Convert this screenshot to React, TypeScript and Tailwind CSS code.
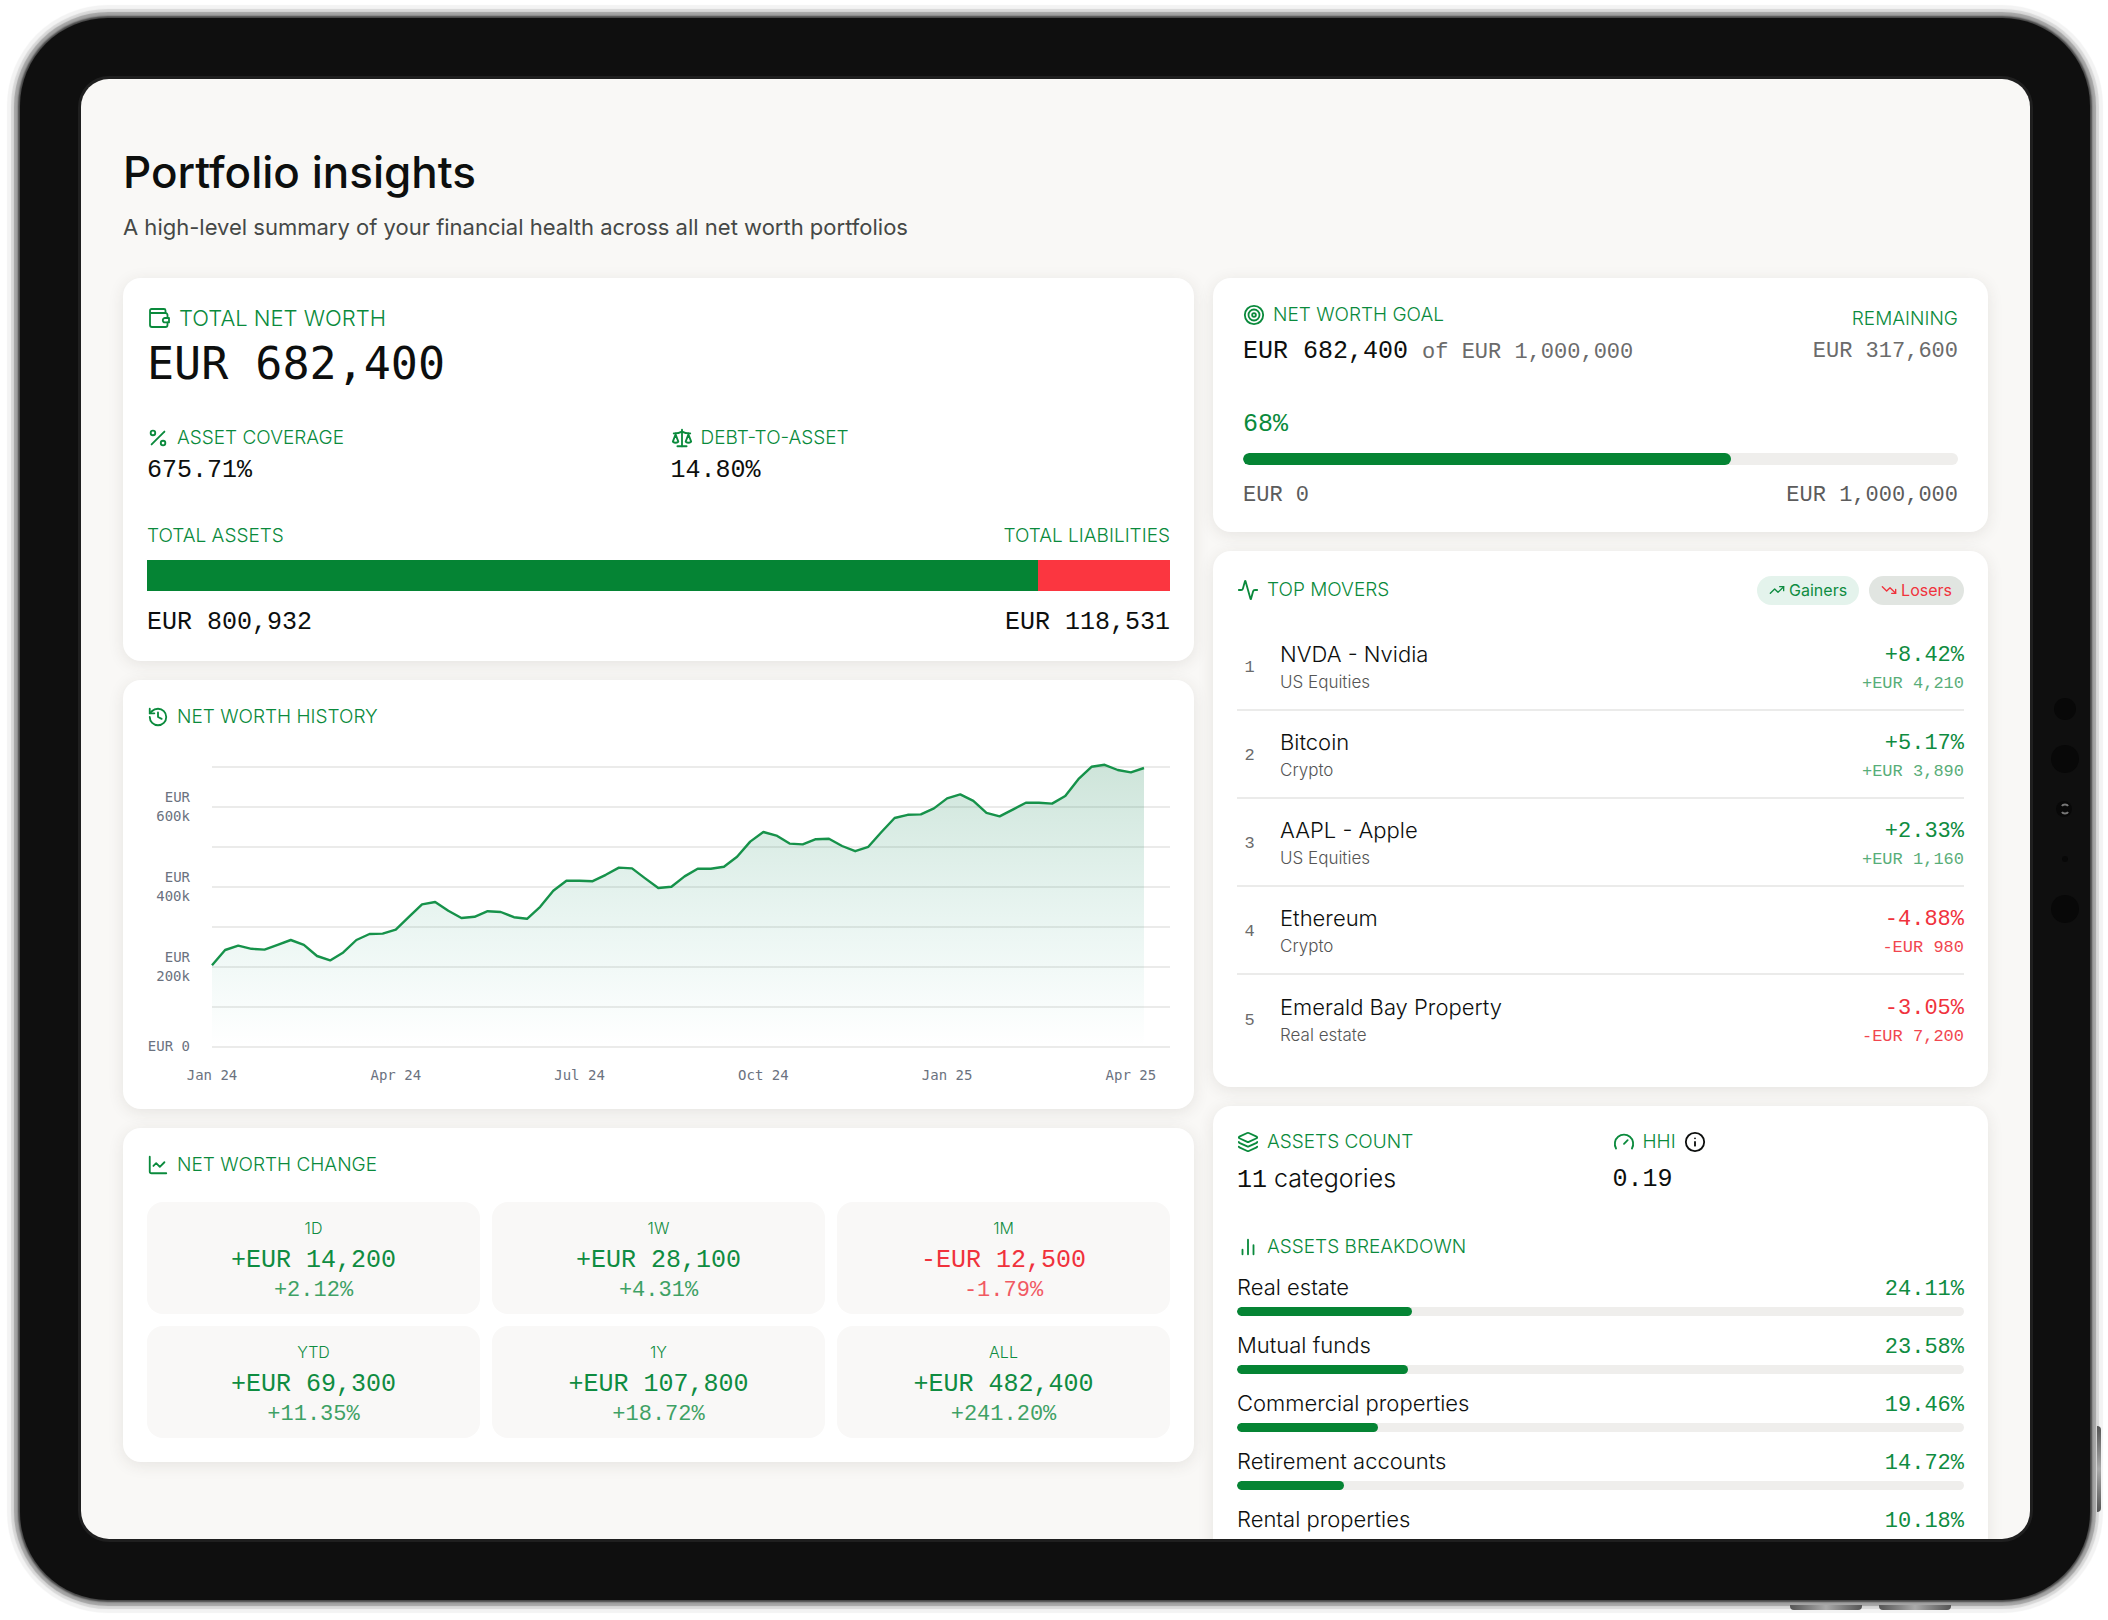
import type { ReactNode } from "react";
import {
  Activity,
  ChartLine,
  Gauge,
  History,
  Info,
  Layers,
  Percent,
  Scale,
  Target,
  TrendingDown,
  TrendingUp,
} from "lucide-react";

const MONO = "font-['Liberation_Mono',monospace]";

const history = [
  202, 240, 251, 243, 241, 253, 265, 253, 225, 214, 234, 265, 280, 281, 291,
  323, 354, 360, 338, 320, 323, 337, 335, 322, 318, 348, 388, 413, 413, 412,
  428, 446, 444, 419, 395, 398, 424, 443, 443, 448, 473, 511, 535, 526, 506,
  504, 517, 518, 500, 487, 498, 535, 570, 578, 579, 594, 619, 629, 613, 583,
  574, 591, 608, 608, 606, 625, 667, 698, 703, 690, 684, 695,
];

const months = ["Jan 24", "Apr 24", "Jul 24", "Oct 24", "Jan 25", "Apr 25"];

const changes = [
  { period: "1D", value: "+EUR 14,200", pct: "+2.12%" },
  { period: "1W", value: "+EUR 28,100", pct: "+4.31%" },
  { period: "1M", value: "-EUR 12,500", pct: "-1.79%" },
  { period: "YTD", value: "+EUR 69,300", pct: "+11.35%" },
  { period: "1Y", value: "+EUR 107,800", pct: "+18.72%" },
  { period: "ALL", value: "+EUR 482,400", pct: "+241.20%" },
];

const movers = [
  { name: "NVDA - Nvidia", type: "US Equities", pct: "+8.42%", value: "+EUR 4,210" },
  { name: "Bitcoin", type: "Crypto", pct: "+5.17%", value: "+EUR 3,890" },
  { name: "AAPL - Apple", type: "US Equities", pct: "+2.33%", value: "+EUR 1,160" },
  { name: "Ethereum", type: "Crypto", pct: "-4.88%", value: "-EUR 980" },
  { name: "Emerald Bay Property", type: "Real estate", pct: "-3.05%", value: "-EUR 7,200" },
];

const breakdown = [
  { name: "Real estate", pct: 24.11 },
  { name: "Mutual funds", pct: 23.58 },
  { name: "Commercial properties", pct: 19.46 },
  { name: "Retirement accounts", pct: 14.72 },
  { name: "Rental properties", pct: 10.18 },
];

const WalletIcon = () => (
  <svg width="24" height="24" viewBox="0 0 24 24" fill="none" stroke="currentColor" strokeWidth="1.8" strokeLinecap="round" strokeLinejoin="round">
    <path d="M3 5.500v13.500a2 2 0 0 0 2 2h13.500a2 2 0 0 0 2-2v-2.500M20.500 12V9a2 2 0 0 0-2-2H4.500A1.500 1.500 0 0 1 3 5.500V4.500A1.500 1.500 0 0 1 4.500 3H17A1.500 1.500 0 0 1 18.500 4.500V7" />
    <path d="M22 12h-4a2.200 2.200 0 0 0 0 4.400h4z" />
  </svg>
);

const BarsIcon = () => (
  <svg width="22" height="22" viewBox="0 0 24 24" fill="none" stroke="currentColor" strokeWidth="2" strokeLinecap="round">
    <path d="M6 20v-5M12 20V4M18 20V10" />
  </svg>
);

const Card = ({ className, children }: { className: string; children: ReactNode }) => (
  <section
    className={`rounded-[18px] bg-white shadow-[0_3px_16px_rgba(60,50,40,0.1)] ${className}`}
  >
    {children}
  </section>
);

const Label = ({ icon, children }: { icon?: ReactNode; children: ReactNode }) => (
  <h2 className="flex h-6 items-center gap-2 text-[19px] leading-6 font-light text-[#0a8a3c]">
    {icon}
    {children}
  </h2>
);

const Bar = ({ label, pct, className }: { label: string; pct: number; className: string }) => (
  <div
    role="progressbar"
    aria-label={label}
    aria-valuenow={pct}
    className={`overflow-hidden rounded-full bg-[#efeeec] ${className}`}
  >
    <div className="h-full rounded-full bg-[#058434]" style={{ width: `${pct}%` }} />
  </div>
);

const HistoryChart = () => {
  const left = 65;
  const base = 292;
  const x = (i: number) => left + (i * 932) / 71;
  const y = (k: number) => base - k * 0.4;
  const line = history.map((k, i) => `${x(i)},${y(k)}`).join(" ");

  return (
    <svg
      viewBox="0 0 1023 331"
      className="mt-[25px] block w-full fill-[#6b7280] font-['DejaVu_Sans_Mono',monospace] text-[14px]"
      role="img"
      aria-label="Net worth history"
    >
      <defs>
        <linearGradient id="area" x1="0" y1="0" x2="0" y2="1">
          <stop offset="0" stopColor="#0a7a44" stopOpacity="0.2" />
          <stop offset="1" stopColor="#10a080" stopOpacity="0" />
        </linearGradient>
      </defs>
      {[0, 1, 2, 3, 4, 5, 6, 7].map((n) => (
        <rect key={n} x={left} y={base - n * 40} width={958} height={2} fill="#ebebea" />
      ))}
      <polygon points={`${left},${base} ${line} ${x(71)},${base}`} fill="url(#area)" />
      <polyline points={line} fill="none" stroke="#16924a" strokeWidth={2.4} strokeLinejoin="round" />
      {[200, 400, 600].map((k) => (
        <text key={k} textAnchor="end">
          <tspan x={43} y={y(k) - 4}>EUR</tspan>
          <tspan x={43} y={y(k) + 15}>{k}k</tspan>
        </text>
      ))}
      <text x={43} y={base + 5} textAnchor="end">EUR 0</text>
      {months.map((month, i) => (
        <text key={month} x={x(i * 14)} y={base + 34} textAnchor="middle">
          {month}
        </text>
      ))}
    </svg>
  );
};

const NetWorth = () => (
  <Card className="px-6 pt-[26px] pb-5">
    <h2 className="flex h-7 items-center gap-2 text-[22px] leading-7 font-light text-[#0a8a3c]">
      <WalletIcon />
      TOTAL NET WORTH
    </h2>
    <p className="mt-0.5 font-['DejaVu_Sans_Mono',monospace] text-[45px] leading-[60px]">EUR 682,400</p>
    <div className="mt-8 grid grid-cols-2 gap-6">
      <div>
        <Label icon={<Percent size={22} />}>ASSET COVERAGE</Label>
        <p className={`mt-px text-[25px] leading-10 ${MONO}`}>675.71%</p>
      </div>
      <div>
        <Label icon={<Scale size={22} />}>DEBT-TO-ASSET</Label>
        <p className={`mt-px text-[25px] leading-10 ${MONO}`}>14.80%</p>
      </div>
    </div>
    <div className="mt-[33px] flex justify-between">
      <Label>TOTAL ASSETS</Label>
      <Label>TOTAL LIABILITIES</Label>
    </div>
    <div className="mt-3 flex h-[31px] bg-[#fb3640]">
      <div className="w-[87.1%] bg-[#058434]" />
    </div>
    <div className={`mt-3.5 flex justify-between text-[25px] leading-9 ${MONO}`}>
      <p>EUR 800,932</p>
      <p>EUR 118,531</p>
    </div>
  </Card>
);

const NetWorthChange = () => (
  <Card className="px-6 pt-[25px] pb-6">
    <Label icon={<ChartLine size={22} />}>NET WORTH CHANGE</Label>
    <div className="mt-[25px] grid grid-cols-3 gap-3">
      {changes.map(({ period, value, pct }) => {
        const down = value.startsWith("-");
        return (
          <div
            key={period}
            className={`flex h-28 flex-col items-center rounded-2xl bg-[#f9f8f7] pt-4 ${down ? "text-[#f0323c]" : "text-[#0f8c41]"}`}
          >
            <h3 className="text-[16px] leading-5 font-light text-[#0f8c41]">{period}</h3>
            <p className={`mt-[5px] text-[25px] leading-9 ${MONO}`}>{value}</p>
            <p className={`text-[22px] leading-6 opacity-80 ${MONO}`}>{pct}</p>
          </div>
        );
      })}
    </div>
  </Card>
);

const Goal = () => (
  <Card className="px-[30px] pt-[25px] pb-[18px]">
    <div className="flex justify-between">
      <div>
        <Label icon={<Target size={22} />}>NET WORTH GOAL</Label>
        <p className={`mt-[5px] text-[25px] leading-10 ${MONO}`}>
          EUR 682,400
          <span className="ml-3.5 text-[22px] text-[#6b6b6b]">of EUR 1,000,000</span>
        </p>
      </div>
      <div className="flex flex-col items-end pt-1">
        <Label>REMAINING</Label>
        <p className={`mt-px text-[22px] leading-10 text-[#6b6b6b] ${MONO}`}>EUR 317,600</p>
      </div>
    </div>
    <p className={`mt-[34px] text-[25px] leading-9 text-[#0a8a3c] ${MONO}`}>68%</p>
    <Bar label="Net worth goal" pct={68.24} className="mt-2.5 h-3" />
    <div className={`mt-[13px] flex justify-between text-[22px] leading-9 text-[#5c5c5c] ${MONO}`}>
      <span>EUR 0</span>
      <span>EUR 1,000,000</span>
    </div>
  </Card>
);

const TopMovers = () => (
  <Card className="p-6">
    <div className="flex h-[30px] items-center justify-between">
      <Label icon={<Activity size={22} />}>TOP MOVERS</Label>
      <div className="flex gap-2.5">
        <button className="flex h-[29px] items-center gap-1 rounded-full bg-[#e4f3ec] px-3 text-[16px] text-[#0f8c41]">
          <TrendingUp size={16} />
          Gainers
        </button>
        <button className="flex h-[29px] items-center gap-1 rounded-full bg-[#e1e5e1] px-3 text-[16px] text-[#f0323c]">
          <TrendingDown size={16} />
          Losers
        </button>
      </div>
    </div>
    <ol className="mt-[18px] divide-y-2 divide-[#ebebea]">
      {movers.map(({ name, type, pct, value }, i) => {
        const down = pct.startsWith("-");
        return (
          <li key={name} className="flex h-22 items-center">
            <span className={`w-[25px] pt-1 text-center text-[17px] text-[#6b6b6b] ${MONO}`}>{i + 1}</span>
            <div className="ml-[18px] flex-1">
              <p className="text-[22px] leading-8 font-light">{name}</p>
              <p className="text-[17px] leading-6 font-light text-[#555]">{type}</p>
            </div>
            <div className={`pt-1 text-right ${MONO} ${down ? "text-[#f0323c]" : "text-[#0f8c41]"}`}>
              <p className="text-[22px] leading-8">{pct}</p>
              <p className={`text-[17px] leading-6 ${down ? "opacity-90" : "opacity-70"}`}>{value}</p>
            </div>
          </li>
        );
      })}
    </ol>
  </Card>
);

const Assets = () => (
  <Card className="px-6 py-6">
    <div className="grid grid-cols-2 gap-6">
      <div>
        <Label icon={<Layers size={22} />}>ASSETS COUNT</Label>
        <p className="mt-1.5 text-[25px] leading-9 font-light">
          <span className={`font-normal ${MONO}`}>11</span> categories
        </p>
      </div>
      <div>
        <Label icon={<Gauge size={22} />}>
          HHI
          <button aria-label="About HHI" className="text-[#0d0f0e]">
            <Info size={22} />
          </button>
        </Label>
        <p className={`mt-2 text-[25px] leading-9 ${MONO}`}>0.19</p>
      </div>
    </div>
    <div className="mt-9">
      <Label icon={<BarsIcon />}>ASSETS BREAKDOWN</Label>
    </div>
    <ul className="mt-3 flex flex-col gap-[13px]">
      {breakdown.map(({ name, pct }) => (
        <li key={name}>
          <div className="flex h-8 items-baseline justify-between text-[22px] leading-8">
            <span className="font-light">{name}</span>
            <span className={`text-[#0f8c41] ${MONO}`}>{pct}%</span>
          </div>
          <Bar label={name} pct={pct} className="mt-1 h-[9px]" />
        </li>
      ))}
    </ul>
  </Card>
);

const Sensors = () => (
  <svg viewBox="0 0 60 240" className="w-[60px]" aria-hidden="true">
    <g fill="#080808">
      <circle cx="35" cy="20" r="11" />
      <circle cx="35" cy="70" r="14" />
      <circle cx="34" cy="120" r="8" />
      <circle cx="35" cy="170" r="3" />
      <circle cx="35" cy="220" r="14" />
    </g>
    <path d="M32 117c1-2 5-2 6 0M32 123c1 2 5 2 6 0" stroke="#777" strokeWidth="2" fill="none" />
  </svg>
);

const App = () => {
  return (
    <div className="relative h-screen overflow-hidden bg-white pt-[18px] pr-[18px] pb-5 pl-5 font-[Inter,sans-serif] text-[#0d0f0e]">
      <div className="relative flex h-full items-center rounded-[88px] bg-[#0f0f0f] py-[61px] pl-[61px] shadow-[0_0_2px_2px_#444,0_0_1px_6px_#a5a5a5,0_0_1px_9px_#d8d8d8,0_0_1px_13px_#f3f3f3]">
        <main className="h-full flex-1 overflow-hidden rounded-[28px] bg-[#f9f8f6] px-[42px] pt-[66px] shadow-[0_0_0_3px_#1f1f1f]">
          <h1 className="text-[44px] leading-[54px] font-medium">Portfolio insights</h1>
          <p className="mt-3 text-[22px] leading-8 text-[#454846]">
            A high-level summary of your financial health across all net worth portfolios
          </p>
          <div className="mt-[35px] grid grid-cols-[1071fr_775fr] items-start gap-[19px]">
            <div className="flex flex-col gap-[19px]">
              <NetWorth />
              <Card className="px-6 pt-[25px] pb-6">
                <Label icon={<History size={22} />}>NET WORTH HISTORY</Label>
                <HistoryChart />
              </Card>
              <NetWorthChange />
            </div>
            <div className="flex flex-col gap-[19px]">
              <Goal />
              <TopMovers />
              <Assets />
            </div>
          </div>
        </main>
        <Sensors />
      </div>
      {/* hardware buttons */}
      <div className="absolute right-[157px] bottom-2.5 h-[5px] w-[72px] rounded-b-sm bg-linear-to-r from-[#555] via-[#aaa] to-[#555]" />
      <div className="absolute right-[246px] bottom-2.5 h-[5px] w-[72px] rounded-b-sm bg-linear-to-r from-[#555] via-[#aaa] to-[#555]" />
      <div className="absolute right-[7px] bottom-[108px] h-[86px] w-1 rounded-r-sm bg-linear-to-b from-[#555] via-[#aaa] to-[#555]" />
    </div>
  );
};

export default App;
